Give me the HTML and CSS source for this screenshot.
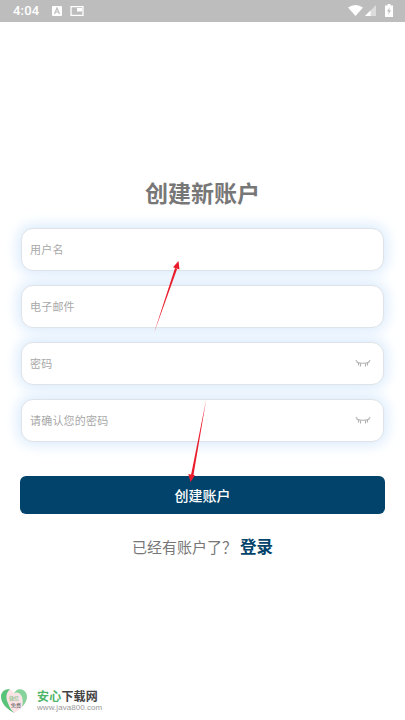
FILE: index.html
```html
<!DOCTYPE html>
<html lang="zh">
<head>
<meta charset="utf-8">
<title>创建新账户</title>
<link rel="stylesheet" href="styles.css">
</head>
<body>
<div class="screen">
  <header class="status">
    <span class="time">4:04</span>
    <svg class="st-ic" width="12" height="12" viewBox="0 0 12 12"><rect x="1" y="1" width="10" height="10" rx="1" fill="#fff"/><path d="M3.500 9 6 3l2.500 6M4.500 7h3" stroke="#bdbdbd" stroke-width="1.200" fill="none"/></svg>
    <svg class="st-ic st-ic2" width="14" height="12" viewBox="0 0 14 12"><path d="M1 1.700h12v8.600H1z" fill="none" stroke="#fff" stroke-width="1.300"/><rect x="7" y="3" width="5" height="3.500" fill="#fff"/></svg>
    <span class="st-space"></span>
    <svg width="15" height="11" viewBox="0 0 15 11"><path d="M0 2.500Q7.500-2.500 15 2.500L7.500 11z" fill="#fff"/></svg>
    <svg class="st-sig" width="11" height="11" viewBox="0 0 11 11"><path d="M11 0v11H0z" fill="#dcdcdc"/><path d="M5.500 5.500V11H0z" fill="#fff"/></svg>
    <svg class="st-bat" width="8" height="13" viewBox="0 0 8 13"><path d="M2.500 0h3v1.500H8V13H0V1.500h2.500z" fill="#fff"/><path d="M4.800 3 2 7.500h1.800L3.200 11 6 6.300H4.200z" fill="#bdbdbd"/></svg>
  </header>
  <main class="form">
    <h1 class="title">创建新账户</h1>
    <div class="field"><span class="ph">用户名</span></div>
    <div class="field"><span class="ph">电子邮件</span></div>
    <div class="field"><span class="ph">密码</span>
      <svg class="eye" width="16" height="9" viewBox="0 0 16 9"><path d="M1.500 3Q8 5.500 14.500 3M.8 1l1.700 2M15.200 1l-1.700 2M5.500 4.500v3M10.500 4.500v3M3.500 4v2.500M12.500 4v2.500" fill="none" stroke="#b0b0b0" stroke-width="1.100"/></svg>
    </div>
    <div class="field"><span class="ph">请确认您的密码</span>
      <svg class="eye" width="16" height="9" viewBox="0 0 16 9"><path d="M1.500 3Q8 5.500 14.500 3M.8 1l1.700 2M15.200 1l-1.700 2M5.500 4.500v3M10.500 4.500v3M3.500 4v2.500M12.500 4v2.500" fill="none" stroke="#b0b0b0" stroke-width="1.100"/></svg>
    </div>
    <div class="submit">创建账户</div>
    <p class="login"><span class="login-q">已经有账户了？</span><span class="login-a">登录</span></p>
  </main>
  <svg class="arrows" width="405" height="720" viewBox="0 0 405 720">
    <path d="M153.800 333.500 175 268 177.200 268.800z" fill="#ea1c2c"/>
    <path d="M178.500 261 179.500 269.500 173 267.300z" fill="#ea1c2c"/>
    <path d="M206.300 399 191 475 193.400 475.500z" fill="#ea1c2c"/>
    <path d="M190.500 482 188.300 474 195 475.300z" fill="#ea1c2c"/>
  </svg>
  <div class="mark">
    <div class="heart">
      <svg width="28" height="26" viewBox="0 0 28 26"><path d="M14 25C5 20 1 14 1 8.500 1 3.500 6 0 10 1.500 12 2.500 13.500 4 14 6 14.500 4 16 2.500 18 1.500 22 0 27 3.500 27 8.500 27 14 23 20 14 25z" fill="#fbe3e6"/><path d="M14 25C5 20 1 14 1 8.500 1 3.500 6 0 10 1.500 6.500 4 5.500 9 7.500 14 9 18 11 22 14 25z" fill="#58c47a"/><path d="M14 6C14.500 4 16 2.500 18 1.500 22 0 27 3.500 27 8.500 27 12 25 16 22 19 24 12 22 5 17 4.500 15.500 4.500 14.500 5 14 6z" fill="#84d39a"/></svg>
      <span class="heart-a">微信</span>
      <span class="heart-b">免费</span>
    </div>
    <div class="mark-text">
      <span class="mark-name"><span class="mark-green">安心</span>下载网</span>
      <span class="mark-url">www.java800.com</span>
    </div>
  </div>
</div>
</body>
</html>
```
FILE: styles.css
```css
* { box-sizing: border-box; }
html, body { margin: 0; padding: 0; }
body { background: #fff; font-family: "Noto Sans CJK SC", "Noto Sans", sans-serif; }
.screen { position: relative; width: 405px; height: 720px; overflow: hidden; background: #fff; }
.status { height: 22px; background: #bdbdbd; display: flex; align-items: center; padding: 0 12px 1px 13px; color: #fff; }
.time { font: 500 13px/1 Roboto, sans-serif; margin-right: 12px; letter-spacing: .2px; }
.st-ic2 { margin-left: 7px; }
.st-space { flex: 1; }
.st-sig { margin-left: 2px; }
.st-bat { margin-left: 9px; }
.form { display: flex; flex-direction: column; padding: 0 20px; }
.title { margin: 154px 0 0; height: 32px; font-size: 23px; line-height: 32px; font-weight: 700; color: #777; text-align: center; }
.field { height: 43px; margin: 0 1px 14px; background: #fff; border: 1px solid #dfe3e8; border-radius: 12px; box-shadow: 0 0 14px 3px #d9eafc; display: flex; align-items: center; justify-content: space-between; padding: 0 12px 0 8px; }
.title + .field { margin-top: 20px; }
.ph { font-size: 11px; line-height: 16px; margin-top: -1px; color: #a8a8a8; letter-spacing: .2px; }
.eye { display: block; }
.submit { height: 38px; margin-top: 20px; background: #02436b; border-radius: 6px; color: #fff; font-size: 14px; font-weight: 500; display: flex; align-items: center; justify-content: center; }
.login { margin: 21px 0 0; line-height: 26px; display: flex; justify-content: center; align-items: center; }
.login-q { font-size: 15px; color: #777; margin-top: -1px; }
.login-a { font-size: 16.500px; font-weight: 700; color: #02436b; margin-left: 3px; margin-top: -3px; }
.arrows { position: absolute; left: 0; top: 0; pointer-events: none; }
.mark { position: absolute; left: 0; top: 688px; display: flex; align-items: flex-start; gap: 9px; }
.heart { position: relative; width: 28px; height: 26px; }
.heart svg { display: block; }
.heart-a, .heart-b { position: absolute; font-size: 5px; line-height: 6px; white-space: nowrap; }
.heart-a { left: 9px; top: 7px; color: #5fb56f; }
.heart-b { left: 11px; top: 14px; color: #555; }
.mark-text { display: flex; flex-direction: column; padding-top: 1px; }
.mark-name { font-size: 12px; line-height: 14px; font-weight: 700; color: #444; letter-spacing: .2px; }
.mark-green { color: #4fb56b; }
.mark-url { font: 8px/9px "Liberation Sans", sans-serif; color: #999; letter-spacing: .05px; }
```
